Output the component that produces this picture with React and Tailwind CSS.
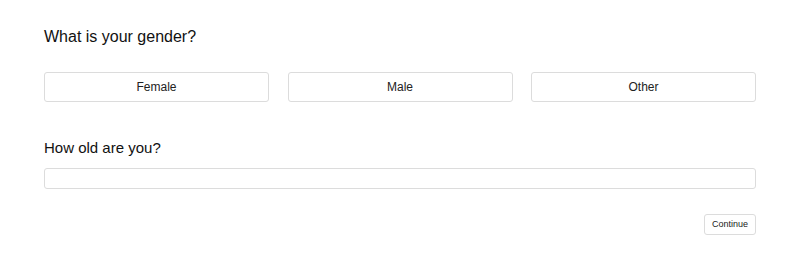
export default function App() {
  const opts = ["Female", "Male", "Other"];
  return (
    <div className="w-[800px] h-[268px] bg-white px-[44px] pt-[27px]" style={{ fontFamily: '"Liberation Sans", Arial, sans-serif' }}>
      <h1 className="text-[16px] leading-[20px] text-[#111] m-0">What is your gender?</h1>
      <div className="grid grid-cols-3 gap-[18.5px] mt-[25px]">
        {opts.map((o) => (
          <button key={o} className="h-[30px] border border-[#dcdcdc] rounded-[3px] bg-white text-[12px] text-[#222]">
            {o}
          </button>
        ))}
      </div>
      <h2 className="text-[15px] leading-[20px] text-[#111] mt-[36px]">How old are you?</h2>
      <input className="block w-full h-[21px] mt-[10px] border border-[#dcdcdc] rounded-[3px] outline-none" />
      <div className="flex justify-end mt-[25px]">
        <button className="h-[21px] px-[7px] border border-[#dcdcdc] rounded-[3px] bg-white text-[9px] text-[#222]">Continue</button>
      </div>
    </div>
  );
}
